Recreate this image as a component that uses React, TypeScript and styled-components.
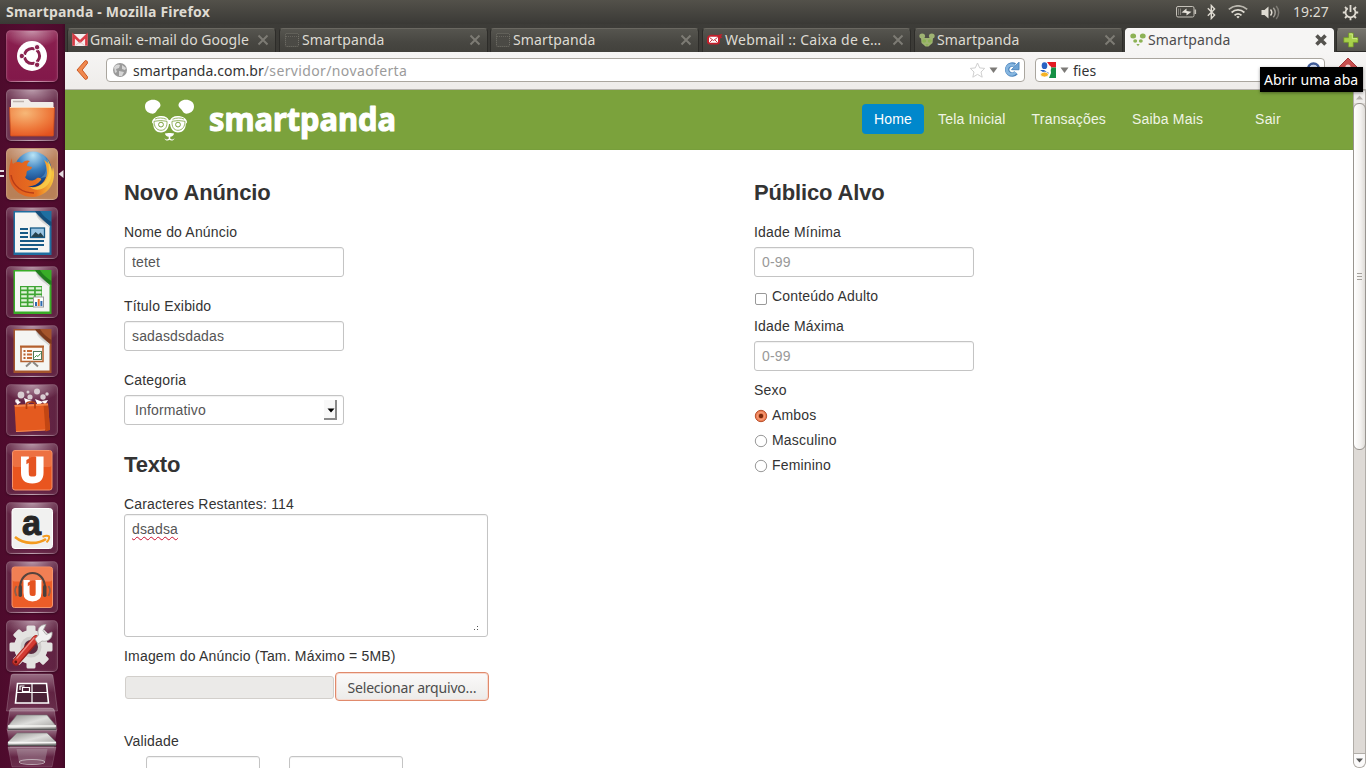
import React from 'react';
import styled, { createGlobalStyle, css } from 'styled-components';

const GlobalStyle = createGlobalStyle`
  *, *::before, *::after { box-sizing: border-box; }
  html, body { margin: 0; padding: 0; }
  body { background: #fff; overflow: hidden; }
  svg { display: block; flex: none; }
`;

const uiFont = `'Noto Sans', 'Open Sans', sans-serif`;
const pageFont = `'Liberation Sans', Arial, sans-serif`;

const Desktop = styled.div`
  width: 1366px;
  height: 768px;
  overflow: hidden;
  display: flex;
  flex-direction: column;
  font-family: ${uiFont};
`;

/* ---------- top panel ---------- */

const TopPanel = styled.header`
  flex: none;
  height: 24px;
  display: flex;
  align-items: center;
  justify-content: space-between;
  padding: 0 7px 0 6px;
  background: linear-gradient(#53514a, #3e3d39 85%, #3a3935);
  color: #dfdbd2;
`;

const WindowTitle = styled.span`
  font-size: 14px;
  font-weight: 700;
  line-height: 24px;
  white-space: nowrap;
  letter-spacing: 0.18px;
`;

const Indicators = styled.div`
  display: flex;
  align-items: center;
  height: 24px;
`;

const Indicator = styled.span<{ $gap: number }>`
  margin-right: ${(p) => p.$gap}px;
`;

const Clock = styled.span`
  font-size: 14px;
  line-height: 24px;
  width: 37px;
  margin-right: 12px;
  white-space: nowrap;
`;

/* ---------- launcher ---------- */

const Workspace = styled.div`
  flex: 1;
  min-height: 0;
  display: flex;
`;

const Launcher = styled.nav`
  flex: none;
  width: 65px;
  padding: 6px 0 0;
  display: flex;
  flex-direction: column;
  background: linear-gradient(90deg, #4d0b2c, #560c32 50%, #4d0b2c 95%, #3f0a25);
`;

const LauncherSlot = styled.div`
  flex: none;
  height: 59px;
  display: flex;
  align-items: flex-start;
`;

const SlotEdge = styled.span`
  flex: none;
  width: 6px;
  height: 52px;
  display: flex;
  align-items: center;
`;

const Tile = styled.div<{ $tone?: string }>`
  flex: none;
  width: 52px;
  height: 52px;
  border-radius: 5px;
  border: 1px solid rgba(255, 255, 255, 0.17);
  background: radial-gradient(ellipse 30px 17px at 50% 0, rgba(255, 255, 255, 0.5), rgba(255, 255, 255, 0)),
    ${(p) => p.$tone ?? 'rgba(255, 255, 255, 0.1)'};
  box-shadow: inset 0 0 3px rgba(255, 255, 255, 0.12), 0 1px 2px rgba(0, 0, 0, 0.3);
  svg { margin: -1px; }
`;

const StackedTiles = styled.div`
  padding-left: 6px;
  margin-top: -7px;
`;

/* ---------- browser chrome ---------- */

const Browser = styled.main`
  position: relative;
  flex: 1;
  min-width: 0;
  display: flex;
  flex-direction: column;
`;

const TabStrip = styled.div`
  flex: none;
  height: 28px;
  padding: 4px 0 0 2px;
  display: flex;
  background: linear-gradient(#3d3c38, #3b3a36);
  overflow: hidden;
`;

const Tab = styled.div<{ $active?: boolean; $gap?: number }>`
  flex: none;
  width: 209px;
  height: 24px;
  margin-right: ${(p) => p.$gap ?? 3}px;
  padding: 0 6px 2px 4px;
  display: flex;
  align-items: center;
  border-radius: 4px 4px 0 0;
  color: #dedbd3;
  background: linear-gradient(#56554f, #474641 60%, #42413c);
  border: 1px solid #2d2c29;
  border-top-color: #6a6861;
  border-bottom: 0;
  ${(p) =>
    p.$active &&
    css`
      color: #4c4c4c;
      background: #f6f5f4;
      border-color: #f9f8f7;
    `}
`;

const TabIcon = styled.span`
  width: 16px;
  margin-right: 2px;
`;

const TabLabel = styled.span<{ $spacing?: number }>`
  flex: 1;
  font-size: 14px;
  line-height: 22px;
  white-space: nowrap;
  letter-spacing: ${(p) => p.$spacing ?? 0}px;
`;

const NewTab = styled.div`
  flex: none;
  width: 32px;
  height: 24px;
  padding: 3px 6px;
  border-radius: 4px 0 0 0;
  background: linear-gradient(#77756d, #55544e);
  border: 1px solid #2d2c29;
  border-top-color: #85837b;
`;

const Toolbar = styled.div`
  flex: none;
  height: 38px;
  display: flex;
  align-items: center;
  padding: 0 0 1px 11px;
  background: linear-gradient(#f6f5f4, #efedeb 90%);
  border-bottom: 1px solid #b5b2ac;
`;

const Field = styled.div<{ $width: number; $inset?: number }>`
  flex: none;
  width: ${(p) => p.$width}px;
  height: 24px;
  margin-right: 10px;
  padding-left: ${(p) => p.$inset ?? 0}px;
  display: flex;
  align-items: center;
  border: 1px solid #aaa69f;
  border-radius: 4px;
  background: #fff;
`;

const BackButton = styled.span`
  width: 30px;
`;

const Address = styled.span`
  flex: 1;
  font-size: 14px;
  line-height: 20px;
  padding-top: 2px;
  color: #333;
  white-space: nowrap;
  letter-spacing: 0.03px;
`;

const AddressPath = styled.span`
  color: #9b9b9b;
  letter-spacing: 0.37px;
`;

const Tooltip = styled.div`
  position: absolute;
  top: 43px;
  left: 1195px;
  width: 103px;
  height: 25px;
  padding-left: 4px;
  background: #000;
  color: #fff;
  font-size: 14px;
  line-height: 25px;
  white-space: nowrap;
  letter-spacing: 0.02px;
  box-shadow: 0 1px 3px rgba(0, 0, 0, 0.4);
  z-index: 2;
`;

/* ---------- web page ---------- */

const Viewport = styled.div`
  flex: 1;
  min-height: 0;
  display: flex;
`;

const Page = styled.div`
  flex: 1;
  min-width: 0;
  overflow: hidden;
  background: #fff;
  font-family: ${pageFont};
  font-size: 14px;
  line-height: 20px;
  letter-spacing: 0.18px;
  color: #333;
`;

const SiteHeader = styled.div`
  height: 60px;
  display: flex;
  align-items: flex-start;
  background: #7ba23c;
  border-bottom: 1px solid #779e3b;
`;

const Brand = styled.div`
  width: 797px;
  padding: 1px 0 0 78px;
`;

const Nav = styled.nav`
  display: flex;
  padding-top: 14px;
`;

const NavLink = styled.a<{ $active?: boolean; $before?: number }>`
  height: 30px;
  line-height: 30px;
  padding: 0 12px;
  margin: 0 1px;
  margin-left: ${(p) => p.$before ?? 1}px;
  border-radius: 4px;
  color: ${(p) => (p.$active ? '#fff' : '#f0f4e4')};
  background: ${(p) => (p.$active ? '#0088cc' : 'transparent')};
  white-space: nowrap;
`;

const Columns = styled.div`
  display: grid;
  grid-template-columns: 630px 1fr;
  padding: 22px 0 0 59px;
`;

const Heading = styled.h3`
  margin: 0 0 10px;
  padding-top: 1px;
  font-size: 22px;
  line-height: 39px;
  font-weight: 700;
  letter-spacing: -0.15px;
`;

const Group = styled.div<{ $after?: number }>`
  margin-bottom: ${(p) => p.$after ?? 19}px;
`;

const Label = styled.label<{ $after?: number }>`
  display: block;
  margin-bottom: ${(p) => p.$after ?? 5}px;
  white-space: nowrap;
`;

const inputBox = css`
  border: 1px solid #c4c4c4;
  border-radius: 3px;
  background: #fff;
  box-shadow: inset 0 1px 1px rgba(0, 0, 0, 0.06);
  color: #555;
  font: 14px/20px ${pageFont};
  letter-spacing: 0.15px;
`;

const TextInput = styled.input<{ $width?: number }>`
  ${inputBox}
  display: block;
  width: ${(p) => p.$width ?? 220}px;
  height: 30px;
  padding: 4px 7px;
  outline: none;
  &::placeholder { color: #999; opacity: 1; }
`;

const SelectBox = styled.div`
  ${inputBox}
  width: 220px;
  height: 30px;
  padding: 0 6px 0 10px;
  display: flex;
  align-items: center;
  justify-content: space-between;
`;

const SelectArrow = styled.span`
  width: 13px;
  height: 20px;
  padding: 8px 0 0 3px;
  border: solid #8a8a8a;
  border-width: 0 2px 2px 0;
  background: #f8f8f8;
`;

const TextArea = styled.div`
  ${inputBox}
  width: 364px;
  height: 123px;
  padding: 4px 7px;
  margin-bottom: 9px;
  display: flex;
  justify-content: space-between;
`;

const Misspelled = styled.span`
  text-decoration: underline wavy #c8102e 1px;
  text-underline-offset: 2px;
`;

const ResizeGrip = styled.span`
  align-self: flex-end;
`;

const FileRow = styled.div`
  display: flex;
  align-items: center;
  height: 29px;
  margin: 6px 0 30px 1px;
`;

const FilePath = styled.div`
  width: 209px;
  height: 23px;
  margin: 2px 1px 0 0;
  border: 1px solid #d2cfcb;
  border-radius: 3px;
  background: #ebeae8;
`;

const FileButton = styled.button`
  width: 154px;
  height: 29px;
  padding: 3px 0 0;
  border: 1px solid #e08a6c;
  border-radius: 4px;
  background: linear-gradient(#fbfafa, #ecebe9);
  box-shadow: inset 0 0 0 1px #f7d9ce;
  color: #4c4c4c;
  font: 14px/20px ${uiFont};
  letter-spacing: -0.2px;
  white-space: nowrap;
`;

const DateRow = styled.div`
  display: flex;
  gap: 29px;
  padding-left: 22px;
`;

const Choice = styled.label<{ $after: number }>`
  display: flex;
  height: 20px;
  align-items: center;
  margin-bottom: ${(p) => p.$after}px;
`;

const ChoiceMark = styled.span<{ $drop: number }>`
  width: 18px;
  padding-top: ${(p) => p.$drop}px;
`;

/* ---------- scrollbar ---------- */

const Scrollbar = styled.div`
  flex: none;
  width: 13px;
  display: flex;
  flex-direction: column;
  background: #dedad6;
  border: 1px solid #b1ada8;
  border-top: 0;
  border-radius: 0 0 6px 6px;
`;

const ScrollArrow = styled.div<{ $height: number; $bottom?: boolean }>`
  height: ${(p) => p.$height}px;
  background: ${(p) => (p.$bottom ? '#fbfafa' : '#efedeb')};
  border-radius: ${(p) => (p.$bottom ? '0 0 6px 6px' : 0)};
  border-top: 1px solid ${(p) => (p.$bottom ? '#b1ada8' : '#c9c5c1')};
  display: flex;
  align-items: center;
  justify-content: center;
`;

const ScrollThumb = styled.div`
  height: 347px;
  margin: 0 -1px;
  border: 1px solid #98948f;
  border-radius: 6px;
  background: linear-gradient(90deg, #fff, #f3f1ef 60%, #dfdcd8);
  display: flex;
  align-items: center;
  justify-content: center;
`;

const ScrollTrack = styled.div`
  flex: 1;
`;

/* ---------- icons ---------- */

const BatteryIcon = () => (
  <svg width="21" height="12" viewBox="0 0 21 12" fill="none" stroke="#c4c0b8">
    <rect x="0.5" y="0.5" width="17.5" height="10.5" rx="1.5" strokeWidth="1" />
    <path d="M19.3 3.5v4.5" strokeWidth="1.6" />
    <path d="M2.5 2.5v6.5M4.5 2.5v6.5" strokeWidth="0.8" opacity=".6" />
    <path d="M5.5 6.5 10.5 2.5V5l5 .8-5 3.7V7z" fill="#e6e2da" stroke="none" />
  </svg>
);

const BluetoothIcon = () => (
  <svg width="9" height="16" viewBox="0 0 9 16" fill="none" stroke="#dfdbd2" strokeWidth="1.4">
    <path d="M.8 4.2 7.6 11 4.3 14.5V1.5L7.6 5 .8 11.8" />
  </svg>
);

const WifiIcon = () => (
  <svg width="20" height="14" viewBox="0 0 20 14" fill="none" stroke="#dfdbd2" strokeWidth="1.7">
    <path d="M.8 4.4C6-.4 14-.4 19.2 4.4" opacity=".75" />
    <path d="M3.6 7.5c3.7-3.4 9.1-3.4 12.8 0" />
    <path d="M6.5 10.3c2.1-1.8 4.9-1.8 7 0" />
    <path d="M8.3 11.8 10 13.5l1.7-1.7a2.4 2.4 0 0 0-3.4 0z" fill="#dfdbd2" stroke="none" />
  </svg>
);

const SoundIcon = () => (
  <svg width="20" height="15" viewBox="0 0 20 15" fill="none" stroke="#dfdbd2" strokeWidth="1.5">
    <path d="M.5 5h3L7.5 1.5v12L3.5 10h-3z" fill="#dfdbd2" stroke="none" />
    <path d="M9.5 4.6c1.5 1.7 1.5 4.1 0 5.8" />
    <path d="M12.3 2.8c2.4 2.8 2.4 6.6 0 9.4" opacity=".6" />
    <path d="M15.2 1c3.3 3.8 3.3 9.2 0 13" opacity=".35" />
  </svg>
);

const PowerGearIcon = () => (
  <svg width="17" height="17" viewBox="0 0 17 17" fill="none" stroke="#dfdbd2">
    <path d="M5.8 4.2a5 5 0 1 0 5.4 0" strokeWidth="1.8" />
    <path d="M8.5 1v7" strokeWidth="1.8" />
    <path d="M8.5 13.2v3M.8 8.5h3M13.2 8.5h3M3 3l1.8 1.8M14 3l-1.8 1.8M3 14l2-2M14 14l-2-2" strokeWidth="1.8" />
  </svg>
);

const GmailIcon = () => (
  <svg width="16" height="16" viewBox="0 0 16 16">
    <rect x=".5" y="2" width="15" height="12" rx="1" fill="#f5eeee" />
    <path d="M1.6 13.8V3.6L8 9.6l6.4-6v10.2" fill="none" stroke="#d93c46" strokeWidth="2.6" />
    <path d="M3.5 13.5 8 9.8l4.5 3.7" fill="none" stroke="#ddb9b9" strokeWidth=".8" />
  </svg>
);

const BlankIcon = () => (
  <svg width="16" height="16" viewBox="0 0 16 16">
    <rect x="1.5" y="1.5" width="13" height="13" rx="1" fill="#4b4a45" stroke="#77756d" strokeDasharray="1 1" />
    <path d="M2 4.5h12" stroke="#66645d" strokeDasharray="1 1" />
  </svg>
);

const MailIcon = () => (
  <svg width="16" height="16" viewBox="0 0 16 16">
    <path d="M0 6C.5 3.5 2.5 2.5 5 2.7l6 .3 4.5-1L14 4.5l1.5 1-2.5 1v3c0 2-1 3-3 3H3c-2 0-3-1-3-3z" fill="#c3202c" />
    <rect x="2" y="4.8" width="9" height="6" rx="1" fill="#fff" />
    <path d="m2.5 5.5 4 3 4-3M2.5 10.5 5 8M10.5 10.5 8 8" fill="none" stroke="#c3202c" strokeWidth=".9" />
  </svg>
);

const PandaTabIcon = ({ muted = false }: { muted?: boolean }) => (
  <svg width="16" height="16" viewBox="0 0 16 16" fill="#8db255">
    {muted && <path d="M2 6h12l-.5 5-4 3.500h-3L2.500 11z" fill="#9fb373" />}
    <ellipse cx="3.2" cy="4" rx="2.9" ry="2.5" fill={muted ? '#9fb373' : '#8db255'} />
    <ellipse cx="12.8" cy="4" rx="2.9" ry="2.5" fill={muted ? '#9fb373' : '#8db255'} />
    <ellipse cx="5.2" cy="9" rx="2" ry="1.8" />
    <ellipse cx="10.8" cy="9" rx="2" ry="1.8" />
    <path d="M6.3 12h3.4L8 14.3z" />
  </svg>
);

const CloseIcon = ({ active = false }: { active?: boolean }) => (
  <svg width="12" height="12" viewBox="0 0 12 12" fill="none" stroke={active ? '#55534f' : '#7d7b74'}>
    <path d="m1.5 1.5 9 9m0-9-9 9" strokeWidth={active ? 3.6 : 2} />
  </svg>
);

const PlusIcon = () => (
  <svg width="16" height="16" viewBox="0 0 16 16">
    <path d="M5.5 1h4.8v4.6H15v4.8h-4.7V15H5.5v-4.6H.8V5.6h4.7z" fill="#a8d14b" stroke="#6f9327" strokeWidth=".7" />
    <path d="M6.5 2h2.8v4.6H14v1" fill="none" stroke="#cdec86" />
  </svg>
);

const BackIcon = () => (
  <svg width="14" height="22" viewBox="0 0 14 22">
    <path d="M9.3 1.5 1 11l8.3 9.500q2.700-.3 2.200-2.700L6.200 11l5.300-6.800q.5-2.400-2.200-2.700z" fill="#f0894f" stroke="#cc5a25" strokeWidth="1" strokeLinejoin="round" />
  </svg>
);

const GlobeIcon = () => (
  <svg width="26" height="16" viewBox="0 0 26 16">
    <circle cx="13" cy="8" r="7" fill="#9a9a9a" />
    <path d="M7 5c2-3 5-3 6-2l-1 3-3 1 1 3-2 1zM15 3l4 3-1 2-3-1zM12 9l5 1-2 4h-3z" fill="#d6d6d6" />
  </svg>
);

const StarIcon = () => (
  <svg width="16" height="16" viewBox="0 0 16 16">
    <path d="m8.5 1 2.2 4.9 5 .5-3.700 3.600 1.200 5.2-4.700-2.800-4.700 2.800L5 10 1.300 6.400l5-.5z" fill="#fff" stroke="#cfcfcf" />
  </svg>
);

const DropIcon = () => (
  <svg width="17" height="8" viewBox="0 0 17 8">
    <path d="M4.5 1.5h8L8.500 7z" fill="#7c7a77" />
  </svg>
);

const ReloadIcon = () => (
  <svg width="22" height="18" viewBox="0 0 22 18">
    <path d="M12.8 4.3a5 5 0 1 0 1.2 7.5" fill="none" stroke="#4f86bd" strokeWidth="4.6" />
    <path d="M9.5 8.700h7.500V1.200z" fill="#6da3d4" stroke="#4f86bd" />
    <path d="M12.5 4.8a4.800 4.800 0 1 0 1 6.500" fill="none" stroke="#86b6e0" strokeWidth="2.8" />
  </svg>
);

const GoogleIcon = () => (
  <svg width="18" height="16" viewBox="0 0 18 16">
    <rect x="2" width="16" height="16" fill="#fff" />
    <path d="M9 0h9v5.5h-5z" fill="#e31b23" />
    <path d="M12.5 5.5H18V16h-7l2-5z" fill="#159045" />
    <ellipse cx="6.5" cy="3.7" rx="2.8" ry="3.4" fill="#2a63c4" />
    <path d="M2 8c3 0 4.500-.5 5.500 1s3 .5 3.500 2.500H7z" fill="#2a63c4" />
    <path d="M8 7.800l4.500-4 .8 3-2.500 3z" fill="#fff" />
    <ellipse cx="6.5" cy="12.6" rx="3.900" ry="2.500" fill="#f5b326" stroke="#fff" strokeWidth=".8" />
  </svg>
);

const SearchGlass = () => (
  <svg width="18" height="18" viewBox="0 0 18 18" fill="none">
    <circle cx="7.5" cy="8" r="5.500" stroke="#3f5b98" strokeWidth="2.6" />
    <circle cx="7.5" cy="8" r="4" fill="#c8d6ee" />
    <path d="m12 12 4 4" stroke="#33508f" strokeWidth="3" />
  </svg>
);

const HomeIcon = () => (
  <svg width="26" height="24" viewBox="0 0 26 24">
    <path d="M13 0 25 12h-3v10H4V12H1z" fill="#c95050" stroke="#a33c3c" />
    <circle cx="13" cy="9" r="2.600" fill="#f3dada" />
  </svg>
);

const PandaLogo = () => (
  <svg width="280" height="56" viewBox="0 -6 280 56">
    <g fill="#fff">
      <path d="M2 9.5C2 5 6 2.800 10 2.800c4.500 0 7.500 2.600 7.500 5.700 0 2-2.500 3-4 5.500-1.300 2.300-3 3-5.500 2.500-3.500-.8-6-3.200-6-7z" />
      <path d="M51 9.500c0-4.500-4-6.700-8-6.700-4.500 0-7.500 2.600-7.500 5.700 0 2 2.500 3 4 5.500 1.300 2.300 3 3 5.500 2.500 3.500-.8 6-3.200 6-7z" />
      <path d="M9 25.500c0-4 4.500-6.500 9.500-6.500 4 0 6.500 1.800 7.300 4h1.400c.8-2.200 3.300-4 7.300-4 5 0 9.500 2.500 9.500 6.500l-1.200 1.500c0 5-3.300 8.500-7.800 8.500-5 0-7.500-3.700-8-8.500h-1c-.5 4.800-3 8.500-8 8.500-4.500 0-7.800-3.500-7.800-8.500z" />
      <path d="M22 36.600c2-.8 7-.8 9 0 0 2-2 3-3.700 3.200v2c1.500 1.200 3 .8 4.200-.6-.5 2.500-3.500 3-5 1.600-1.500 1.400-4.500.9-5-1.600 1.200 1.400 2.700 1.800 4.200.6v-2C24 39.600 22 38.600 22 36.600z" />
    </g>
    <g fill="none" stroke="#7ba23c" strokeWidth=".8">
      <path d="M11 24.300q7-1.500 13 0c.3 5-1.500 9-6 9s-7-4-7-9zM29 24.300q6-1.500 13 0c0 5-2.500 9-7 9s-6.300-4-6-9z" />
      <path d="M12 22c3-1.400 8-1.400 11.500.3M29.500 22.300c3.500-1.700 8.500-1.700 11.500-.3" />
    </g>
    <g fill="none" stroke="#7ba23c" strokeWidth="1"><circle cx="18" cy="27.600" r="2.400" /><circle cx="35" cy="27.600" r="2.400" /></g>
    <text x="66" y="33.500" fill="#fff" stroke="#fff" strokeWidth="1.100" strokeLinejoin="round" fontFamily={uiFont} fontSize="32" fontWeight="700" letterSpacing="0" textLength="187" lengthAdjust="spacingAndGlyphs">
      smartpanda
    </text>
  </svg>
);

const IconCanvas = ({ children }: { children: React.ReactNode }) => (
  <svg width="52" height="52" viewBox="0 0 52 52">{children}</svg>
);

const UbuntuArt = () => (
  <IconCanvas>
    <circle cx="26" cy="26" r="15" fill="#fff" />
    <circle cx="26" cy="26" r="7.6" fill="none" stroke="#8a2350" strokeWidth="3" />
    <g stroke="#fff" strokeWidth="1.8">
      <path d="M26 26H15M26 26l5.500-9.500M26 26l5.500 9.500" />
    </g>
    <circle cx="26" cy="26" r="5.6" fill="#fff" />
    <g fill="#8a2350" stroke="#fff" strokeWidth="1">
      <circle cx="15.8" cy="26" r="2.7" /><circle cx="31.1" cy="17.2" r="2.7" /><circle cx="31.1" cy="34.8" r="2.7" />
    </g>
  </IconCanvas>
);

const FolderArt = () => (
  <IconCanvas>
    <defs><radialGradient id="folder" cx=".35" cy=".2" r=".9"><stop stopColor="#f7b878" /><stop offset=".6" stopColor="#ee7a3c" /><stop offset="1" stopColor="#e4521f" /></radialGradient></defs>
    <path d="M5 11q0-1 1-1h16l3 3h21.500q1 0 1 1V22H5z" fill="#f1ece8" />
    <path d="M7 12.500h11" stroke="#bdb3ae" strokeWidth="1.5" />
    <path d="M3.500 18.500h45L47.500 46q0 1-1 1H5.500q-1 0-1-1z" fill="url(#folder)" stroke="#c94b1c" strokeWidth=".8" />
    <path d="M4 18.500h44" stroke="#fbd9b5" />
  </IconCanvas>
);

const FirefoxArt = () => (
  <IconCanvas>
    <defs>
      <radialGradient id="globe" cx=".5" cy=".1" r=".8"><stop stopColor="#b9e4f6" /><stop offset=".5" stopColor="#3a7fbe" /><stop offset="1" stopColor="#123a7c" /></radialGradient>
      <linearGradient id="fox" x1="0" x2="1"><stop stopColor="#de5a20" /><stop offset=".6" stopColor="#e8701f" /><stop offset="1" stopColor="#f8c840" /></linearGradient>
    </defs>
    <circle cx="27" cy="22" r="18.5" fill="url(#globe)" />
    <path d="M31 5c4 2 6 6 8 9 3 7 0 14-5 16l6-1c5-6 4-14-2-21z" fill="#5fa3d6" opacity=".5" />
    <path d="M6 10c0 3 0 4 1 6 3-3 7-2 9-1 3-3 6-3 8-2-2 1-3 3-3 5l5 1c0 2-2 3-5 4-1 3 0 5-2 6 2 4 8 5 12 1 3-1 5 1 4 2-4 5-9 7-14 6 10 4 19-3 20-13 0-5-1-9-3-13 5 3 8 7 8 12l1-5c4 14-4 29-20 30C12 49 3 38 3 26c0-7 1-12 3-16z" fill="url(#fox)" />
    <path d="M41 11c4 10 2 20-5 25-4 3-8 4-12 3 5 5 16 3 20-6 3-7 2-15-3-22z" fill="#f9cf4a" opacity=".85" />
    <path d="M5 27c2 12 12 18 23 18" fill="none" stroke="#b73d17" strokeWidth="1.5" />
  </IconCanvas>
);

const DocumentArt = ({ color, dark, children }: { color: string; dark: string; children: React.ReactNode }) => (
  <IconCanvas>
    <path d="M7.500 4H45.500V48H7.500z" fill={color} />
    <path d="M9 5.500h20.500L43.500 19v26.500H9z" fill="#f5f5f3" />
    <path d="M29.500 5.500 43.500 19v2C38 16 31 13 29.500 5.500z" fill="#d6d6d4" />
    <path d="M29 4c4 7 10 12 16.500 15v-4C41 12 37 9 34 4z" fill={dark} opacity=".5" />
    {children}
  </IconCanvas>
);

const WriterArt = () => (
  <DocumentArt color="#1f6ea0" dark="#0a2e55">
    <path d="M14 22h8M14 26h8M14 30h8M14 34h24M14 38h24M14 42h18" stroke="#175a86" strokeWidth="1.8" />
    <rect x="24.5" y="21" width="14" height="9.5" fill="#9cc6e4" stroke="#175a86" strokeWidth="1.3" />
    <path d="m25 30 4.500-5 3 2.500 2-2 3.500 4.500z" fill="#27434f" />
  </DocumentArt>
);

const CalcArt = () => (
  <DocumentArt color="#39ad27" dark="#0c5016">
    <rect x="14" y="20" width="22" height="21" fill="#3fa534" />
    <g fill="#dff3d8">
      {[21.2, 25.2, 29.2, 33.2, 37.2].map((y) => [15.2, 22.5, 29.8].map((x) => <rect key={`${x}-${y}`} x={x} y={y} width="5.6" height="2.3" />))}
    </g>
    <rect x="27.5" y="31" width="10" height="10" fill="#fff" stroke="#999" />
    <path d="M30 40v-4" stroke="#2d6bb0" strokeWidth="2" /><path d="M32.700 40v-7" stroke="#e3752b" strokeWidth="2" /><path d="M35.400 40v-5" stroke="#2d6bb0" strokeWidth="2" />
  </DocumentArt>
);

const ImpressArt = () => (
  <DocumentArt color="#a5552c" dark="#541f0e">
    <path d="M14 20.500h24v2H14z" fill="#b4602f" />
    <rect x="15" y="22" width="22" height="14.5" fill="#fdf7f2" stroke="#b4602f" strokeWidth="1.5" />
    <path d="M17.500 26h2M17.500 29.500h2M17.500 33h2" stroke="#b4602f" strokeWidth="2" />
    <path d="M21 26h5M21 29.500h5M21 33h5" stroke="#c46a35" strokeWidth="1.8" />
    <rect x="27.5" y="26.5" width="8" height="8" fill="#fff" stroke="#4f7a59" />
    <path d="m28.500 32.500 2-2 1.500 1 2.500-3" stroke="#3b8a3a" fill="none" />
    <path d="m25 37-5 4.500M27 37l5 4.500" stroke="#8d8883" strokeWidth="2" />
  </DocumentArt>
);

const SoftwareCenterArt = () => (
  <IconCanvas>
    <g fill="#d9cdd2">
      <circle cx="15" cy="11" r="3.4" /><circle cx="31" cy="7.5" r="3" /><circle cx="37" cy="13" r="2.7" /><circle cx="24" cy="13" r="2.6" /><circle cx="11" cy="17" r="2" /><circle cx="41" cy="10" r="1.7" /><circle cx="22" cy="8" r="1.5" />
    </g>
    <g fill="#fff"><path d="M10 16l5 2-4 3zM18 14l8 3-6 4zM29 15l8 3-5 4zM36 17l6-1-3 5z" /></g>
    <path d="M8.500 21 42 19.500 44 46 10 48z" fill="#e45a1f" />
    <path d="M37.500 20 42 19.500 44 46l-4.500 1.500z" fill="#c24613" />
    <path d="M8.500 21 42 19.500v2L9 23z" fill="#f2864c" />
    <path d="M20.500 25v-5q.3-2 3-2h2.500q3 0 3 2v4.500" fill="none" stroke="#b23c0e" strokeWidth="1.7" />
    <path d="M10 47.500 39 46" stroke="#f08b57" />
  </IconCanvas>
);

const UbuntuOne = ({ x, y, scale }: { x: number; y: number; scale: number }) => (
  <g transform={`translate(${x} ${y}) scale(${scale})`}>
    <path d="M0 0h8v15.500q0 4.500 3.500 4.500t3.500-4.500V0h8v16.500q0 11-11.500 11T0 16.500z" fill="#fff" />
    <path d="M5.500 3.500 11 .5h4.500v18q0 2-3.800 2T8 18V6.500L5.500 8z" fill="#e55421" />
  </g>
);

const UbuntuOneArt = () => (
  <IconCanvas>
    <rect x="6.5" y="7.5" width="39.5" height="39.5" rx="2.5" fill="#e9551f" stroke="#f4956d" />
    <rect x="7" y="8" width="38.5" height="16" rx="2" fill="#f7a583" opacity=".35" />
    <UbuntuOne x={15} y={13.5} scale={0.98} />
  </IconCanvas>
);

const AmazonArt = () => (
  <IconCanvas>
    <rect x="6" y="6.5" width="40.5" height="40" rx="3" fill="#f1f1f0" stroke="#fff" />
    <text x="16" y="33" fill="#262626" stroke="#262626" strokeWidth="1" fontFamily={pageFont} fontWeight="700" fontSize="35" textLength="19" lengthAdjust="spacingAndGlyphs">a</text>
    <path d="M9 35C18 42.500 32 42.500 40 37" fill="none" stroke="#f49b1f" strokeWidth="2.6" />
    <path d="M36.500 34.700c3-1 5.500-1 6.500-.3.500 1.500-.5 4-2.500 6" fill="none" stroke="#f49b1f" strokeWidth="2" />
  </IconCanvas>
);

const MusicArt = () => (
  <IconCanvas>
    <rect x="6" y="6" width="40.5" height="40.5" rx="2.5" fill="#ec5d28" stroke="#f4956d" />
    <rect x="6.5" y="6.5" width="39.5" height="14" rx="2" fill="#f9b595" opacity=".4" />
    <UbuntuOne x={17.5} y={19} scale={0.78} />
    <path d="M14 27c0-20 25-20 25 0" fill="none" stroke="#55433d" strokeWidth="2.2" />
    <rect x="12.5" y="24" width="3.5" height="12" rx="1.7" fill="#4a403d" /><rect x="37" y="24" width="3.5" height="12" rx="1.7" fill="#4a403d" />
    <path d="M10.500 25c-2 3-2 6 0 10M42.500 25c2 3 2 6 0 10" fill="none" stroke="#8b5f4e" strokeWidth="1.8" />
  </IconCanvas>
);

const SettingsArt = () => (
  <IconCanvas>
    <g fill="#e4e3e1">
      <circle cx="25" cy="27" r="17" />
      {[0, 45, 90, 135].map((a) => <rect key={a} x="20.5" y="5.5" width="9" height="43" rx="1.5" transform={`rotate(${a} 25 27)`} />)}
    </g>
    <circle cx="25" cy="27" r="10.5" fill="#cfcdcb" />
    <circle cx="25" cy="27" r="7" fill="#5a2a40" />
    <path d="M10 42 30 19" stroke="#9b201c" strokeWidth="7.5" strokeLinecap="round" />
    <path d="M10 41.500 30 18.500" stroke="#d33a32" strokeWidth="5.5" strokeLinecap="round" />
    <path d="M11 38 28 18" stroke="#f08a80" strokeWidth="1.3" strokeLinecap="round" />
    <circle cx="9.8" cy="42" r="1.4" fill="#5e1412" />
    <path d="m29 19 3.500-4C30.500 9 34 4.500 40 4.500l-3 6 3 4 6-2.500c1 6-4 10.500-10 9l-4 3z" fill="#f2f1f0" stroke="#a5a3a1" strokeWidth=".8" />
  </IconCanvas>
);

const StackArt = () => (
  <svg width="52" height="97" viewBox="0 0 52 97">
    <defs>
      <linearGradient id="drive" x1="0" y1="0" x2="1" y2="1"><stop stopColor="#8f8d8b" /><stop offset=".5" stopColor="#dededc" /><stop offset="1" stopColor="#9d9b99" /></linearGradient>
      <linearGradient id="glass" x1="0" y1="0" x2="0" y2="1"><stop stopColor="#fff" stopOpacity=".4" /><stop offset=".5" stopColor="#fff" stopOpacity=".1" /><stop offset="1" stopColor="#fff" stopOpacity=".14" /></linearGradient>
    </defs>
    <path d="M5 4Q5 2 8 2H44q3 0 3 2L51.500 39H.5z" fill="url(#glass)" stroke="#fff" strokeOpacity=".2" />
    <path d="M11.500 11.500H40.500l2 19.500h-33z" fill="#4a2136" stroke="#fff" strokeWidth="1.6" />
    <path d="M26 11.500V31M10.500 20.500h31" stroke="#fff" strokeWidth="1.2" />
    <path d="M13.500 14h5M14 14v4M16.500 15.500h7v4h-7z" fill="none" stroke="#fff" strokeWidth="1.2" />
    <path d="M3.500 39q0-3 4-3h37q4 0 4 3L51 58H1z" fill="url(#glass)" stroke="#fff" strokeOpacity=".2" />
    <path d="M11 43h30l9 11v3H2v-3z" fill="url(#drive)" stroke="#777" strokeWidth=".6" />
    <path d="M2 54h48" stroke="#f7f7f5" strokeWidth="1.5" />
    <path d="M2 57.500h48" stroke="#555" strokeWidth="1.5" />
    <path d="M1 58h50l-3 18H4z" fill="url(#glass)" />
    <path d="M11 61h30l9 9v3H2v-3z" fill="url(#drive)" stroke="#777" strokeWidth=".6" />
    <path d="M2 70.500h48" stroke="#f7f7f5" strokeWidth="1.5" />
    <path d="M2 73.500h48" stroke="#555" strokeWidth="1.5" />
    <path d="M2 75h48l-4 20H6z" fill="url(#glass)" stroke="#fff" strokeOpacity=".15" />
    <path d="M10.500 77h31L39 90q-13 4-26 0z" fill="#b4a8ae" opacity=".4" />
    <ellipse cx="26" cy="90" rx="13" ry="2.5" fill="none" stroke="#cfc5ca" strokeWidth=".8" />
  </svg>
);

const RunningPips = () => (
  <svg width="6" height="10" viewBox="0 0 6 10" fill="#e6dde1"><path d="M0 1h4v2H0zM0 6h4v2H0z" /></svg>
);

const FocusArrow = () => (
  <svg width="6" height="8" viewBox="0 0 6 8" fill="#e6dde1"><path d="M5.500 0v8L.5 4z" /></svg>
);

const RadioIcon = ({ checked = false }: { checked?: boolean }) => (
  <svg width="14" height="14" viewBox="0 0 14 14">
    <circle cx="7" cy="7" r="5.7" fill={checked ? '#ee7f55' : '#fff'} stroke={checked ? '#b9512c' : '#999'} />
    {checked && <circle cx="7" cy="7" r="2.2" fill="#7c2a0c" />}
    {checked && <circle cx="7" cy="7" r="3.7" fill="none" stroke="#f5a481" strokeWidth=".8" />}
  </svg>
);

const CheckboxIcon = () => (
  <svg width="14" height="14" viewBox="0 0 14 14"><rect x="1.5" y="1.5" width="11" height="11" rx="1.5" fill="#fff" stroke="#999" /></svg>
);

/* ---------- data ---------- */

const launcherItems = [
  { id: 'dash', art: <UbuntuArt />, tone: 'linear-gradient(#8b204f, #82184a)' },
  { id: 'files', art: <FolderArt />, tone: 'rgba(255,255,255,.16)' },
  { id: 'firefox', art: <FirefoxArt />, tone: 'linear-gradient(#b97f59, #b88057)', focused: true },
  { id: 'writer', art: <WriterArt /> },
  { id: 'calc', art: <CalcArt /> },
  { id: 'impress', art: <ImpressArt /> },
  { id: 'software', art: <SoftwareCenterArt /> },
  { id: 'one', art: <UbuntuOneArt /> },
  { id: 'amazon', art: <AmazonArt /> },
  { id: 'music', art: <MusicArt /> },
  { id: 'settings', art: <SettingsArt /> },
];

const tabs = [
  { title: 'Gmail: e-mail do Google', icon: <GmailIcon />, spacing: 0.04, gap: 3 },
  { title: 'Smartpanda', icon: <BlankIcon />, spacing: 0.15, gap: 2 },
  { title: 'Smartpanda', icon: <BlankIcon />, spacing: 0.15, gap: 3 },
  { title: 'Webmail :: Caixa de e…', icon: <MailIcon />, spacing: 0.27, gap: 3 },
  { title: 'Smartpanda', icon: <PandaTabIcon muted />, spacing: 0.15, gap: 2 },
  { title: 'Smartpanda', icon: <PandaTabIcon />, spacing: 0.15, gap: 2, active: true },
];

export default function App() {
  return (
    <Desktop>
      <GlobalStyle />
      <TopPanel>
        <WindowTitle>Smartpanda - Mozilla Firefox</WindowTitle>
        <Indicators>
          <Indicator $gap={10}><BatteryIcon /></Indicator>
          <Indicator $gap={12}><BluetoothIcon /></Indicator>
          <Indicator $gap={13}><WifiIcon /></Indicator>
          <Indicator $gap={12}><SoundIcon /></Indicator>
          <Clock>19:27</Clock>
          <PowerGearIcon />
        </Indicators>
      </TopPanel>
      <Workspace>
        <Launcher>
          {launcherItems.map((item) => (
            <LauncherSlot key={item.id}>
              <SlotEdge>{item.focused && <RunningPips />}</SlotEdge>
              <Tile $tone={item.tone}>{item.art}</Tile>
              <SlotEdge>{item.focused && <FocusArrow />}</SlotEdge>
            </LauncherSlot>
          ))}
          <StackedTiles><StackArt /></StackedTiles>
        </Launcher>
        <Browser>
          <TabStrip>
            {tabs.map((tab, i) => (
              <Tab key={i} $active={tab.active} $gap={tab.gap}>
                <TabIcon>{tab.icon}</TabIcon>
                <TabLabel $spacing={tab.spacing}>{tab.title}</TabLabel>
                <CloseIcon active={tab.active} />
              </Tab>
            ))}
            <NewTab><PlusIcon /></NewTab>
          </TabStrip>
          <Toolbar>
            <BackButton><BackIcon /></BackButton>
            <Field $width={919}>
              <GlobeIcon />
              <Address>smartpanda.com.br<AddressPath>/servidor/novaoferta</AddressPath></Address>
              <StarIcon />
              <DropIcon />
              <ReloadIcon />
            </Field>
            <Field $width={290} $inset={2}>
              <GoogleIcon />
              <DropIcon />
              <Address>fies</Address>
              <SearchGlass />
            </Field>
            <HomeIcon />
          </Toolbar>
          <Tooltip>Abrir uma aba</Tooltip>
          <Viewport>
            <Page>
              <SiteHeader>
                <Brand><PandaLogo /></Brand>
                <Nav>
                  <NavLink $active $before={0}>Home</NavLink>
                  <NavLink>Tela Inicial</NavLink>
                  <NavLink>Transações</NavLink>
                  <NavLink>Saiba Mais</NavLink>
                  <NavLink $before={27}>Sair</NavLink>
                </Nav>
              </SiteHeader>
              <Columns>
                <div>
                  <Heading>Novo Anúncio</Heading>
                  <Group><Label>Nome do Anúncio</Label><TextInput defaultValue="tetet" /></Group>
                  <Group><Label>Título Exibido</Label><TextInput defaultValue="sadasdsdadas" /></Group>
                  <Group>
                    <Label>Categoria</Label>
                    <SelectBox>
                      Informativo
                      <SelectArrow><svg width="8" height="5" viewBox="0 0 8 5"><path d="M.5.5h7L4 4.500z" /></svg></SelectArrow>
                    </SelectBox>
                  </Group>
                  <Heading>Texto</Heading>
                  <Label $after={0}>Caracteres Restantes: 114</Label>
                  <TextArea>
                    <Misspelled>dsadsa</Misspelled>
                    <ResizeGrip><svg width="6" height="6" viewBox="0 0 6 6"><path d="M3 0h1v1H3zM3 3h1v1H3zM0 3h1v1H0z" fill="#555" /></svg></ResizeGrip>
                  </TextArea>
                  <Label $after={0}>Imagem do Anúncio (Tam. Máximo = 5MB)</Label>
                  <FileRow><FilePath /><FileButton>Selecionar arquivo…</FileButton></FileRow>
                  <Label>Validade</Label>
                  <DateRow><TextInput $width={114} /><TextInput $width={114} /></DateRow>
                </div>
                <div>
                  <Heading>Público Alvo</Heading>
                  <Group $after={9}><Label>Idade Mínima</Label><TextInput placeholder="0-99" /></Group>
                  <Choice $after={10}><ChoiceMark $drop={5}><CheckboxIcon /></ChoiceMark>Conteúdo Adulto</Choice>
                  <Group $after={9}><Label>Idade Máxima</Label><TextInput placeholder="0-99" /></Group>
                  <Label>Sexo</Label>
                  <Choice $after={5}><ChoiceMark $drop={2}><RadioIcon checked /></ChoiceMark>Ambos</Choice>
                  <Choice $after={5}><ChoiceMark $drop={2}><RadioIcon /></ChoiceMark>Masculino</Choice>
                  <Choice $after={5}><ChoiceMark $drop={2}><RadioIcon /></ChoiceMark>Feminino</Choice>
                </div>
              </Columns>
            </Page>
            <Scrollbar>
              <ScrollArrow $height={13}><svg width="7" height="5" viewBox="0 0 7 5"><path d="M0 4.500h7L3.500.5z" fill="#b5b1ac" /></svg></ScrollArrow>
              <ScrollThumb><svg width="5" height="7" viewBox="0 0 5 7"><path d="M0 .5h5M0 3.500h5M0 6.500h5" stroke="#a5a19c" /></svg></ScrollThumb>
              <ScrollTrack />
              <ScrollArrow $height={14} $bottom><svg width="7" height="5" viewBox="0 0 7 5"><path d="M0 .5h7L3.500 4.500z" fill="#555" /></svg></ScrollArrow>
            </Scrollbar>
          </Viewport>
        </Browser>
      </Workspace>
    </Desktop>
  );
}
